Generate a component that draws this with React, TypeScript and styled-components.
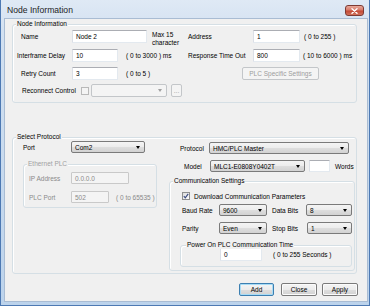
import React from "react";
import styled, { createGlobalStyle, css } from "styled-components";

const Global = createGlobalStyle`
  html, body { margin: 0; padding: 0; }
  body {
    width: 370px; height: 306px; overflow: hidden;
    background: #c9dbef;
    font-family: "Liberation Sans", Arial, sans-serif;
    font-size: 6.5px;
    color: #000;
  }
  * { box-sizing: border-box; }
`;

const Window = styled.div`
  width: 370px;
  height: 306px;
  display: flex;
  flex-direction: column;
  background: linear-gradient(180deg, #dfe9f5 0%, #d3e1f1 30px, #bcd3ec 100%);
  box-shadow: inset 1px 0 0 #4d79b3, inset 0 -1px 0 #4d79b3, inset -1px 0 0 #4d79b3;
`;

const TitleBar = styled.div`
  height: 19px;
  display: flex;
  align-items: flex-start;
  justify-content: space-between;
  padding: 0 6px 0 7px;
  flex-shrink: 0;
`;

const Title = styled.div`
  font-size: 8.6px;
  line-height: 9px;
  margin-top: 6px;
  color: #1e1e1e;
`;

const CloseBtn = styled.div`
  width: 19px;
  height: 11px;
  margin-top: 5px;
  border-radius: 3px;
  border: 1px solid #7d3a33;
  background: linear-gradient(180deg, #e8a99c 0%, #d77b6a 45%, #c44a36 55%, #d0715c 100%);
  display: flex;
  align-items: center;
  justify-content: center;
`;

const Client = styled.div`
  flex: 1;
  margin: 0 3px 5px 5px;
  background: #f0f0f0;
  display: flex;
  flex-direction: column;
  padding-left: 7px;
  box-shadow: 0 0 0 1px #a9bcd3;
`;

const Group = styled.div<{ $w: number; $h: number; $mt: number; $ml?: number }>`
  position: relative;
  width: ${(p) => p.$w}px;
  height: ${(p) => p.$h}px;
  margin-top: ${(p) => p.$mt}px;
  margin-left: ${(p) => p.$ml ?? 0}px;
  border: 1px solid #d5dfe5;
  border-radius: 3px;
  box-shadow: inset 1px 1px 0 #fff;
  flex-shrink: 0;
`;

const Legend = styled.span<{ $x: number; $dis?: boolean }>`
  position: absolute;
  top: -5px;
  left: ${(p) => p.$x}px;
  padding: 0 1px;
  background: #f0f0f0;
  line-height: 8px;
  white-space: nowrap;
  color: ${(p) => (p.$dis ? "#a0a0a0" : "#000")};
`;

const Row = styled.div<{ $mt: number; $h?: number }>`
  display: flex;
  align-items: center;
  height: ${(p) => p.$h ?? 13}px;
  margin-top: ${(p) => p.$mt}px;
`;

const Cell = styled.div<{ $w?: number }>`
  display: flex;
  align-items: center;
  height: 100%;
  ${(p) => (p.$w ? `width: ${p.$w}px; flex-shrink: 0;` : "flex: 1;")}
`;

const Label = styled.span<{ $w: number; $pl?: number; $ml?: number; $dis?: boolean }>`
  width: ${(p) => p.$w}px;
  padding-left: ${(p) => p.$pl ?? 0}px;
  margin-left: ${(p) => p.$ml ?? 0}px;
  flex-shrink: 0;
  white-space: nowrap;
  color: ${(p) => (p.$dis ? "#8a8a8a" : "#000")};
`;

const Unit = styled.span<{ $ml: number; $dis?: boolean }>`
  margin-left: ${(p) => p.$ml}px;
  white-space: nowrap;
  color: ${(p) => (p.$dis ? "#8a8a8a" : "#000")};
`;

const Note = styled.span<{ $ml: number }>`
  margin-left: ${(p) => p.$ml}px;
  align-self: flex-start;
  margin-top: 1px;
  line-height: 7.5px;
`;

const TextBox = styled.div<{ $w: number; $h?: number; $ml?: number; $dis?: boolean }>`
  width: ${(p) => p.$w}px;
  height: ${(p) => p.$h ?? 13}px;
  margin-left: ${(p) => p.$ml ?? 0}px;
  flex-shrink: 0;
  padding-left: 3px;
  display: flex;
  align-items: center;
  border: 1px solid #e3e9ef;
  border-top-color: #abadb3;
  border-left-color: #dbdfe6;
  border-radius: 1px;
  ${(p) =>
    p.$dis
      ? css`
          background: #f4f4f4;
          color: #8a8a8a;
          border-color: #c9c9c9;
        `
      : css`
          background: #fff;
          color: #000;
        `}
`;

const Combo = styled.div<{ $w: number; $h?: number; $ml?: number; $dis?: boolean }>`
  width: ${(p) => p.$w}px;
  height: ${(p) => p.$h ?? 12}px;
  margin-left: ${(p) => p.$ml ?? 0}px;
  flex-shrink: 0;
  display: flex;
  align-items: center;
  justify-content: space-between;
  padding: 0 4px 0 3px;
  border-radius: 2px;
  ${(p) =>
    p.$dis
      ? css`
          border: 1px solid #c3c6c9;
          background: #f4f4f4;
        `
      : css`
          border: 1px solid #7a7a7a;
          background: linear-gradient(180deg, #f4f4f4 0%, #ececec 50%, #dedede 51%, #d2d2d2 100%);
        `}
`;

const Arrow = styled.span<{ $dis?: boolean }>`
  width: 0;
  height: 0;
  border-left: 2.5px solid transparent;
  border-right: 2.5px solid transparent;
  border-top: 3px solid ${(p) => (p.$dis ? "#a0a0a0" : "#000")};
`;

const Btn = styled.div<{ $w: number; $h?: number; $ml?: number; $dis?: boolean; $def?: boolean }>`
  width: ${(p) => p.$w}px;
  height: ${(p) => p.$h ?? 13}px;
  margin-left: ${(p) => p.$ml ?? 0}px;
  flex-shrink: 0;
  display: flex;
  align-items: center;
  justify-content: center;
  border-radius: 2px;
  white-space: nowrap;
  ${(p) =>
    p.$dis
      ? css`
          border: 1px solid #c3c6c9;
          background: #f4f4f4;
          color: #9c9c9c;
        `
      : css`
          border: 1px solid ${p.$def ? "#3c7fb1" : "#7a7a7a"};
          background: linear-gradient(180deg, #f4f4f4 0%, #ececec 50%, #dedede 51%, #d2d2d2 100%);
          color: #000;
          box-shadow: ${p.$def ? "inset 0 0 0 1px #a8dcf6" : "inset 0 0 0 1px #fbfbfb"};
        `}
`;

const Check = styled.div<{ $ml?: number; $dis?: boolean }>`
  width: 8px;
  height: 8px;
  margin-left: ${(p) => p.$ml ?? 0}px;
  flex-shrink: 0;
  border: 1px solid ${(p) => (p.$dis ? "#b9b9b9" : "#8e8f8f")};
  background: ${(p) => (p.$dis ? "#f4f4f4" : "linear-gradient(135deg, #dcdcdc, #fdfdfd)")};
  display: flex;
  align-items: center;
  justify-content: center;
`;

const Columns = styled.div`
  display: flex;
`;

const Col = styled.div<{ $w?: number }>`
  display: flex;
  flex-direction: column;
  ${(p) => (p.$w ? `width: ${p.$w}px; flex-shrink: 0;` : "flex: 1;")}
`;

const ButtonBar = styled.div`
  display: flex;
  justify-content: flex-end;
  margin-top: 9px;
  padding-right: 9px;
`;

export default function App() {
  return (
    <>
      <Global />
      <Window>
        <TitleBar>
          <Title>Node Information</Title>
          <CloseBtn>
            <svg width="7" height="6" viewBox="0 0 7 6">
              <path d="M1 0.8 L6 5.2 M6 0.8 L1 5.2" stroke="#fff" strokeWidth="1.4" strokeLinecap="round" />
            </svg>
          </CloseBtn>
        </TitleBar>
        <Client>
          <Group $w={345} $h={79} $mt={5}>
            <Legend $x={3}>Node Information</Legend>
            <Row $mt={5}>
              <Cell $w={175}>
                <Label $w={59} $pl={8}>Name</Label>
                <TextBox $w={75}>Node 2</TextBox>
                <Note $ml={5}>
                  Max 15
                  <br />
                  character
                </Note>
              </Cell>
              <Cell>
                <Label $w={65}>Address</Label>
                <TextBox $w={47}>1</TextBox>
                <Unit $ml={4}>( 0 to 255 )</Unit>
              </Cell>
            </Row>
            <Row $mt={6}>
              <Cell $w={175}>
                <Label $w={59} $pl={4}>Interframe Delay</Label>
                <TextBox $w={46}>10</TextBox>
                <Unit $ml={8}>( 0 to 3000 ) ms</Unit>
              </Cell>
              <Cell>
                <Label $w={65}>Response Time Out</Label>
                <TextBox $w={47}>800</TextBox>
                <Unit $ml={3}>( 10 to 6000 ) ms</Unit>
              </Cell>
            </Row>
            <Row $mt={5}>
              <Cell $w={175}>
                <Label $w={59} $pl={8}>Retry Count</Label>
                <TextBox $w={46}>3</TextBox>
                <Unit $ml={8}>( 0 to 5 )</Unit>
              </Cell>
              <Cell>
                <Btn $w={77} $ml={54} $dis>PLC Specific Settings</Btn>
              </Cell>
            </Row>
            <Row $mt={4}>
              <Cell $w={175}>
                <Label $w={68} $pl={9}>Reconnect Control</Label>
                <Check $dis />
                <Combo $w={76} $h={13} $ml={2} $dis>
                  <span />
                  <Arrow $dis />
                </Combo>
                <Btn $w={11} $ml={4} $dis>
                  ...
                </Btn>
              </Cell>
            </Row>
          </Group>

          <Group $w={345} $h={137} $mt={34}>
            <Legend $x={3}>Select Protocol</Legend>
            <Columns>
              <Col $w={155}>
                <Row $mt={3} $h={12}>
                  <Label $w={58} $pl={10}>Port</Label>
                  <Combo $w={74}>
                    <span>Com2</span>
                    <Arrow />
                  </Combo>
                </Row>
                <Group $w={134} $h={44} $mt={11} $ml={10}>
                  <Legend $x={3} $dis>Ethernet PLC</Legend>
                  <Row $mt={7} $h={12}>
                    <Label $w={47} $pl={5} $dis>IP Address</Label>
                    <TextBox $w={58} $h={12} $dis>0.0.0.0</TextBox>
                  </Row>
                  <Row $mt={7} $h={12}>
                    <Label $w={47} $pl={5} $dis>PLC Port</Label>
                    <TextBox $w={38} $h={12} $dis>502</TextBox>
                    <Unit $ml={7} $dis>( 0 to 65535 )</Unit>
                  </Row>
                </Group>
              </Col>
              <Col>
                <Row $mt={4} $h={12}>
                  <Label $w={41} $pl={12}>Protocol</Label>
                  <Combo $w={140}>
                    <span>HMC/PLC Master</span>
                    <Arrow />
                  </Combo>
                </Row>
                <Row $mt={6} $h={12}>
                  <Label $w={42} $pl={16}>Model</Label>
                  <Combo $w={95}>
                    <span>MLC1-E0808Y0402T</span>
                    <Arrow />
                  </Combo>
                  <TextBox $w={21} $h={12} $ml={4} />
                  <Unit $ml={5}>Words</Unit>
                </Row>
                <Group $w={186} $h={90} $mt={9} $ml={1}>
                  <Legend $x={3}>Communication Settings</Legend>
                  <Row $mt={10} $h={8}>
                    <Check $ml={12}>
                      <svg width="6" height="6" viewBox="0 0 6 6">
                        <path d="M0.8 3.2 L2.3 4.8 L5.2 0.9" stroke="#3c4d82" strokeWidth="1.2" fill="none" />
                      </svg>
                    </Check>
                    <Unit $ml={4}>Download Communication Parameters</Unit>
                  </Row>
                  <Row $mt={4} $h={12}>
                    <Label $w={49} $pl={12}>Baud Rate</Label>
                    <Combo $w={48}>
                      <span>9600</span>
                      <Arrow />
                    </Combo>
                    <Label $w={34} $ml={5}>Data Bits</Label>
                    <Combo $w={46}>
                      <span>8</span>
                      <Arrow />
                    </Combo>
                  </Row>
                  <Row $mt={6} $h={12}>
                    <Label $w={49} $pl={12}>Parity</Label>
                    <Combo $w={48}>
                      <span>Even</span>
                      <Arrow />
                    </Combo>
                    <Label $w={35} $ml={5}>Stop Bits</Label>
                    <Combo $w={45}>
                      <span>1</span>
                      <Arrow />
                    </Combo>
                  </Row>
                  <Group $w={172} $h={22} $mt={11} $ml={10}>
                    <Legend $x={5}>Power On PLC Communication Time</Legend>
                    <Row $mt={2}>
                      <TextBox $w={42} $ml={39}>0</TextBox>
                      <Unit $ml={11}>( 0 to 255 Seconds )</Unit>
                    </Row>
                  </Group>
                </Group>
              </Col>
            </Columns>
          </Group>

          <ButtonBar>
            <Btn $w={35} $def>Add</Btn>
            <Btn $w={36} $ml={7}>Close</Btn>
            <Btn $w={36} $ml={5}>Apply</Btn>
          </ButtonBar>
        </Client>
      </Window>
    </>
  );
}
